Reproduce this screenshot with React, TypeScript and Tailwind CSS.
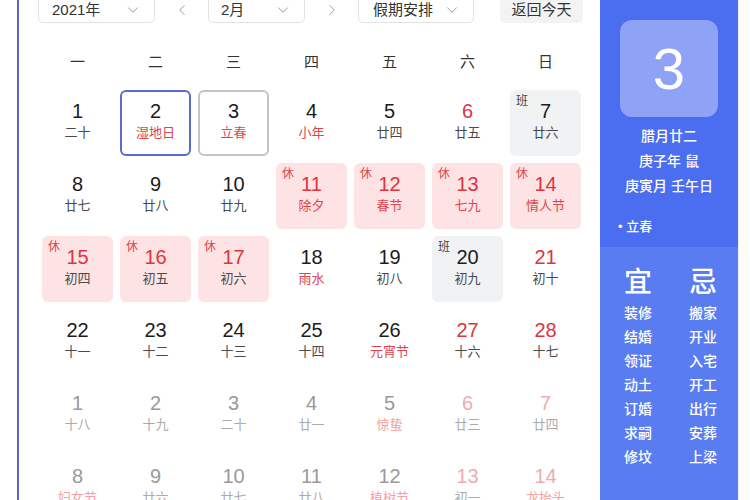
import { ChevronDown, ChevronLeft, ChevronRight } from 'lucide-react';

type Day = {
    n: number;
    l: string;
    nr?: boolean; // red number
    lr?: boolean; // red lunar text
    tag?: 'rest' | 'work';
    faded?: boolean;
    ring?: 'today' | 'sel';
};

const weeks: Day[][] = [
    [
        { n: 1, l: '二十' },
        { n: 2, l: '湿地日', lr: true, ring: 'today' },
        { n: 3, l: '立春', lr: true, ring: 'sel' },
        { n: 4, l: '小年', lr: true },
        { n: 5, l: '廿四' },
        { n: 6, l: '廿五', nr: true },
        { n: 7, l: '廿六', tag: 'work' },
    ],
    [
        { n: 8, l: '廿七' },
        { n: 9, l: '廿八' },
        { n: 10, l: '廿九' },
        { n: 11, l: '除夕', tag: 'rest', nr: true, lr: true },
        { n: 12, l: '春节', tag: 'rest', nr: true, lr: true },
        { n: 13, l: '七九', tag: 'rest', nr: true, lr: true },
        { n: 14, l: '情人节', tag: 'rest', nr: true, lr: true },
    ],
    [
        { n: 15, l: '初四', tag: 'rest', nr: true },
        { n: 16, l: '初五', tag: 'rest', nr: true },
        { n: 17, l: '初六', tag: 'rest', nr: true },
        { n: 18, l: '雨水', lr: true },
        { n: 19, l: '初八' },
        { n: 20, l: '初九', tag: 'work' },
        { n: 21, l: '初十', nr: true },
    ],
    [
        { n: 22, l: '十一' },
        { n: 23, l: '十二' },
        { n: 24, l: '十三' },
        { n: 25, l: '十四' },
        { n: 26, l: '元宵节', lr: true },
        { n: 27, l: '十六', nr: true },
        { n: 28, l: '十七', nr: true },
    ],
    [
        { n: 1, l: '十八', faded: true },
        { n: 2, l: '十九', faded: true },
        { n: 3, l: '二十', faded: true },
        { n: 4, l: '廿一', faded: true },
        { n: 5, l: '惊蛰', lr: true, faded: true },
        { n: 6, l: '廿三', nr: true, faded: true },
        { n: 7, l: '廿四', nr: true, faded: true },
    ],
    [
        { n: 8, l: '妇女节', lr: true, faded: true },
        { n: 9, l: '廿六', faded: true },
        { n: 10, l: '廿七', faded: true },
        { n: 11, l: '廿八', faded: true },
        { n: 12, l: '植树节', lr: true, faded: true },
        { n: 13, l: '初一', nr: true, faded: true },
        { n: 14, l: '龙抬头', nr: true, lr: true, faded: true },
    ],
];

const yi = ['装修', '结婚', '领证', '动土', '订婚', '求嗣', '修坟'];
const ji = ['搬家', '开业', '入宅', '开工', '出行', '安葬', '上梁'];

function Cell({ d }: { d: Day }) {
    let bg = '';
    if (d.tag === 'rest') bg = 'bg-[#fde3e3]';
    if (d.tag === 'work') bg = 'bg-[#f1f2f4]';

    let ring = 'border-2 border-transparent';
    if (d.ring === 'today') ring = 'border-2 border-[#5b6bd0]';
    if (d.ring === 'sel') ring = 'border-2 border-[#c4c4c4]';

    let numColor = 'text-[#1c1c1c]';
    if (d.nr) numColor = 'text-[#dc3540]';
    if (d.faded) numColor = d.nr ? 'text-[#f3aaae]' : 'text-[#9a9a9a]';

    let lunarColor = 'text-[#4a4a4a]';
    if (d.lr) lunarColor = 'text-[#e0444c]';
    if (d.faded) lunarColor = d.lr ? 'text-[#f3a0a4]' : 'text-[#ababab]';

    return (
        <div className={`relative h-[66px] rounded-[6px] flex flex-col items-center pt-[7px] ${bg} ${ring}`}>
            {d.tag === 'rest' && (
                <span className="absolute left-[4px] top-[2px] text-[12px] leading-[14px] text-[#e0444c]">休</span>
            )}
            {d.tag === 'work' && (
                <span className="absolute left-[4px] top-[2px] text-[12px] leading-[14px] text-[#444]">班</span>
            )}
            <span className={`text-[20px] leading-[24px] font-['Liberation_Sans',sans-serif] ${numColor}`}>{d.n}</span>
            <span className={`mt-[1px] text-[13px] leading-[18px] ${lunarColor}`}>{d.l}</span>
        </div>
    );
}

export default function App() {
    return (
        <div className="w-[750px] h-[500px] overflow-hidden bg-white flex font-['Liberation_Sans','Noto_Sans_CJK_SC',sans-serif]">
            <div className="w-[17px] shrink-0" />
            <div className="w-[2px] shrink-0 bg-[#5b67c2]" />

            {/* Calendar */}
            <div className="w-[581px] shrink-0 flex flex-col">
                {/* Controls */}
                <div className="-mt-[8px] h-[31px] pl-[19px] flex items-stretch text-[15px] text-[#333]">
                    <div className="w-[117px] border border-[#e3e3e3] rounded-[5px] flex items-center justify-between pl-[13px] pr-[12px] pt-[6px]">
                        <span>2021年</span>
                        <ChevronDown className="w-[18px] h-[18px] text-[#999]" strokeWidth={1.3} />
                    </div>
                    <div className="w-[53px] flex items-center justify-center pt-[6px]">
                        <ChevronLeft className="w-[18px] h-[18px] text-[#999]" strokeWidth={1.3} />
                    </div>
                    <div className="w-[97px] border border-[#e3e3e3] rounded-[5px] flex items-center justify-between pl-[12px] pr-[12px] pt-[6px]">
                        <span>2月</span>
                        <ChevronDown className="w-[18px] h-[18px] text-[#999]" strokeWidth={1.3} />
                    </div>
                    <div className="w-[53px] flex items-center justify-center pt-[6px]">
                        <ChevronRight className="w-[18px] h-[18px] text-[#999]" strokeWidth={1.3} />
                    </div>
                    <div className="w-[116px] border border-[#e3e3e3] rounded-[5px] flex items-center justify-between pl-[14px] pr-[12px] pt-[6px]">
                        <span>假期安排</span>
                        <ChevronDown className="w-[18px] h-[18px] text-[#999]" strokeWidth={1.3} />
                    </div>
                    <div className="ml-[26px] w-[83px] bg-[#f3f3f3] rounded-[5px] flex items-center justify-center pt-[6px]">
                        返回今天
                    </div>
                </div>

                {/* Weekday header */}
                <div className="mt-[29px] pl-[23px] grid grid-cols-[repeat(7,71px)] gap-x-[7px] h-[20px] text-[15px] leading-[20px] text-[#333]">
                    {['一', '二', '三', '四', '五', '六', '日'].map((w) => (
                        <div key={w} className="text-center">{w}</div>
                    ))}
                </div>

                {/* Days */}
                <div className="mt-[18px] pl-[23px] grid grid-cols-[repeat(7,71px)] gap-x-[7px] gap-y-[7px]">
                    {weeks.flat().map((d, i) => (
                        <Cell key={i} d={d} />
                    ))}
                </div>
            </div>

            {/* Day detail panel */}
            <div className="w-[138px] shrink-0 flex flex-col text-white">
                <div className="h-[247px] bg-[#4b6df0] flex flex-col items-center pt-[20px]">
                    <div className="w-[98px] h-[97px] rounded-[12px] bg-[#8ea3f5] flex items-center justify-center text-[58px] font-light">
                        3
                    </div>
                    <div className="mt-[7px] flex flex-col items-center text-[14px] leading-[25px] font-medium">
                        <span>腊月廿二</span>
                        <span>庚子年 鼠</span>
                        <span>庚寅月 壬午日</span>
                    </div>
                    <div className="self-start pl-[18px] mt-[16px] text-[13px] leading-[24px] font-medium">• 立春</div>
                </div>
                <div className="flex-1 bg-[#5a7cf1] pl-[18px] pt-[18px] flex gap-[25px]">
                    <div className="w-[40px] flex flex-col items-center">
                        <span className="text-[28px] leading-[36px] font-medium">宜</span>
                        {yi.map((t) => (
                            <span key={t} className="text-[14px] leading-[24px] font-medium">{t}</span>
                        ))}
                    </div>
                    <div className="w-[40px] flex flex-col items-center">
                        <span className="text-[28px] leading-[36px] font-medium">忌</span>
                        {ji.map((t) => (
                            <span key={t} className="text-[14px] leading-[24px] font-medium">{t}</span>
                        ))}
                    </div>
                </div>
            </div>

            <div className="flex-1 bg-[#fdfcf7] border-l border-[#eef0f6]" />
        </div>
    );
}
